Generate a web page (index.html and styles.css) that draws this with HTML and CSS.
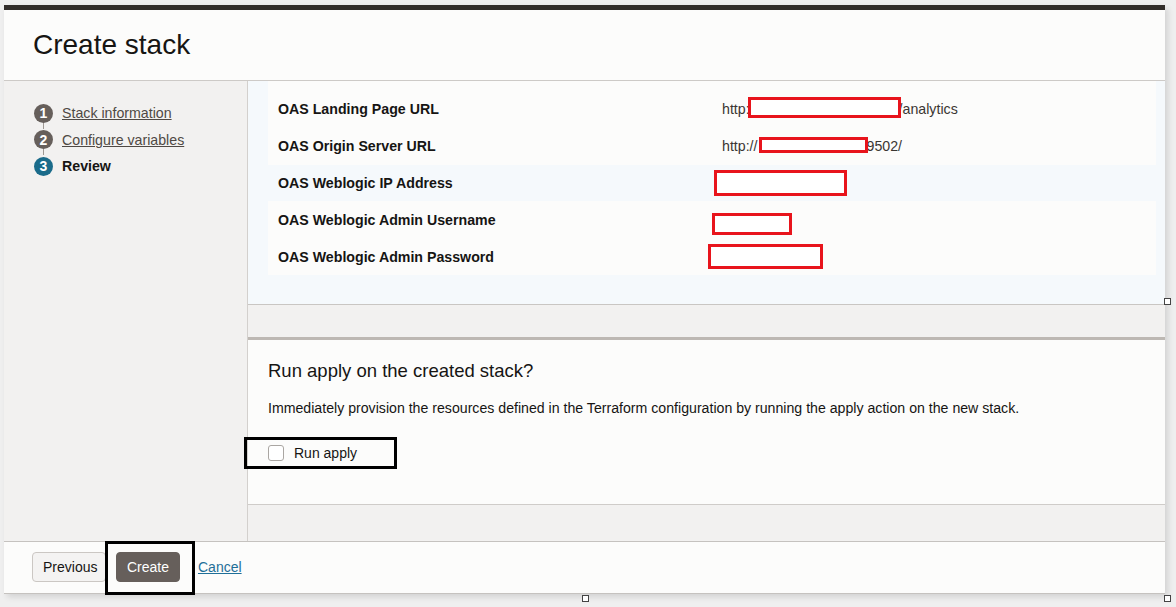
FILE: index.html
```html
<!DOCTYPE html>
<html>
<head>
<meta charset="utf-8">
<title>Create stack</title>
<link rel="stylesheet" href="styles.css">
</head>
<body>
<div class="frame">
  <div class="topbar"></div>
  <header class="header"><h1 class="title">Create stack</h1></header>
  <div class="body">
    <aside class="sidebar">
      <ol class="steps">
        <li class="step"><span class="num">1</span><a class="step-link" href="#">Stack information</a></li>
        <li class="step"><span class="num">2</span><a class="step-link" href="#">Configure variables</a></li>
        <li class="step current"><span class="num">3</span><span class="step-cur">Review</span></li>
      </ol>
    </aside>
    <main class="main">
      <section class="review">
        <div class="rows">
          <div class="row white first"><div class="label">OAS Landing Page URL</div><div class="value">http:<span class="redact r1"></span>/analytics</div></div>
          <div class="row white"><div class="label">OAS Origin Server URL</div><div class="value">http://<span class="redact r2"></span>9502/</div></div>
          <div class="row blue"><div class="label">OAS Weblogic IP Address</div><div class="value"><span class="redact r3"></span></div></div>
          <div class="row white"><div class="label">OAS Weblogic Admin Username</div><div class="value"><span class="redact r4"></span></div></div>
          <div class="row white"><div class="label">OAS Weblogic Admin Password</div><div class="value"><span class="redact r5"></span></div></div>
        </div>
      </section>
      <section class="apply">
        <h2 class="apply-title">Run apply on the created stack?</h2>
        <p class="apply-desc">Immediately provision the resources defined in the Terraform configuration by running the apply action on the new stack.</p>
        <label class="check"><span class="box"></span>Run apply</label>
        <div class="annot annot-apply"></div>
      </section>
    </main>
  </div>
  <footer class="footer">
    <button class="btn btn-secondary">Previous</button>
    <button class="btn btn-primary">Create</button>
    <a class="cancel" href="#">Cancel</a>
    <div class="annot annot-create"></div>
  </footer>
</div>
<div class="handle h1"></div>
<div class="handle h2"></div>
<div class="handle h3"></div>
</body>
</html>
```

FILE: styles.css
```css
* { box-sizing: border-box; }
html, body { margin: 0; padding: 0; }
body {
  background: #efefef;
  font-family: "Liberation Sans", Arial, sans-serif;
  color: #161513;
  width: 1176px;
  height: 607px;
  overflow: hidden;
  position: relative;
}
.frame {
  position: relative;
  margin: 5px 0 0 4px;
  width: 1161px;
  height: 589px;
  background: #fcfcfb;
  box-shadow: 3px 3px 6px rgba(0,0,0,0.12);
  display: flex;
  flex-direction: column;
}
.topbar { height: 5px; background: #312d2a; flex: none; }
.header {
  height: 71px;
  flex: none;
  background: #fcfcfb;
  border-bottom: 1px solid #cdcac7;
  display: flex;
  align-items: center;
  padding-left: 29px;
}
.title {
  margin: 0;
  font-size: 28px;
  font-weight: normal;
  color: #161513;
}
.body {
  height: 460px;
  flex: none;
  display: flex;
  background: #f2f1f0;
}
.sidebar {
  width: 243px;
  flex: none;
  background: #f2f1f0;
  padding: 19px 0 0 30px;
}
.steps { list-style: none; margin: 0; padding: 0; }
.step {
  display: flex;
  align-items: center;
  height: 26.5px;
  position: relative;
  font-size: 14.2px;
}
.step + .step::before {
  content: "";
  position: absolute;
  left: 9px;
  top: -10px;
  height: 12px;
  width: 1px;
  background: #9e9893;
}
.num {
  width: 19px;
  height: 19px;
  border-radius: 50%;
  background: #665f5b;
  color: #fff;
  font-size: 14px;
  font-weight: bold;
  display: flex;
  align-items: center;
  justify-content: center;
  margin-right: 9px;
  position: relative;
  z-index: 1;
}
.current .num { background: #1a6b8a; }
.step-link { color: #4f4944; text-decoration: underline; }
.step-cur { font-weight: bold; color: #161513; }
.main {
  flex: 1;
  border-left: 1px solid #d3d0cd;
  display: flex;
  flex-direction: column;
}
.review {
  height: 224px;
  flex: none;
  background: #f5f9fc;
  border-bottom: 1px solid #c9c6c3;
  padding: 0 9px 0 20px;
}
.row {
  height: 36.8px;
  display: flex;
  align-items: center;
  font-size: 14.2px;
}
.row.first { height: 46.8px; padding-top: 10px; }
.row.white { background: #fcfcfb; }
.row.blue { background: #f5f9fc; }
.label {
  width: 454px;
  padding-left: 10px;
  font-weight: bold;
  color: #161513;
}
.value {
  color: #3a3632;
  display: flex;
  align-items: center;
}
.redact {
  display: inline-block;
  border: 3px solid #e8141c;
  background: #fff;
}
.r1 { width: 153px; height: 21px; margin-left: -2px; margin-right: -2px; position: relative; top: -2px; }
.r2 { width: 109px; height: 16px; margin-left: 1px; margin-right: -1px; position: relative; top: -1px; }
.r3 { width: 133px; height: 26px; margin-left: -8px; }
.r4 { width: 80px; height: 22px; margin-left: -10px; position: relative; top: 4px; }
.r5 { width: 115px; height: 25px; margin-left: -14px; }
.apply {
  margin-top: 32px;
  height: 168px;
  flex: none;
  background: #fcfcfb;
  border-top: 3px solid #bdb8b3;
  border-bottom: 1px solid #cfccc9;
  padding: 20px 20px 0 20px;
  position: relative;
}
.apply-title {
  margin: 0;
  font-size: 18.5px;
  font-weight: normal;
  color: #161513;
  line-height: 22px;
}
.apply-desc {
  margin: 17px 0 0 0;
  font-size: 14.15px;
  color: #161513;
  line-height: 18px;
}
.check {
  margin-top: 28px;
  display: flex;
  align-items: center;
  font-size: 14px;
  color: #161513;
}
.box {
  width: 16px;
  height: 16px;
  border: 1px solid #aaa6a2;
  border-radius: 3px;
  background: #fff;
  margin-right: 10px;
}
.annot {
  position: absolute;
  border: 3px solid #000;
}
.annot-apply { left: -4px; top: 97px; width: 153px; height: 32px; }
.footer {
  flex: none;
  height: 53px;
  border-top: 1px solid #c5c2bf;
  border-bottom: 1px solid #c5c2bf;
  background: #fcfcfb;
  display: flex;
  align-items: center;
  padding-left: 28px;
  position: relative;
}
.btn {
  font-family: "Liberation Sans", Arial, sans-serif;
  font-size: 14px;
  height: 30px;
  border-radius: 4px;
  padding: 0 10px;
  position: relative;
  top: -1px;
}
.btn-secondary {
  background: #f4f3f2;
  border: 1px solid #cbc7c3;
  color: #161513;
  width: 74px;
}
.btn-primary {
  background: #665f5b;
  border: 1px solid #665f5b;
  color: #fff;
  width: 64px;
  margin-left: 10px;
}
.cancel {
  margin-left: 18px;
  font-size: 14px;
  color: #1f6f98;
  text-decoration: underline;
  position: relative;
  top: -1px;
}
.annot-create { left: 101px; top: -1px; width: 90px; height: 54px; }
.handle {
  position: absolute;
  width: 7px;
  height: 7px;
  border: 1px solid #444;
  background: #fff;
}
.h1 { left: 1164px; top: 298px; }
.h2 { left: 582px; top: 595px; }
.h3 { left: 1164px; top: 595px; }
```
